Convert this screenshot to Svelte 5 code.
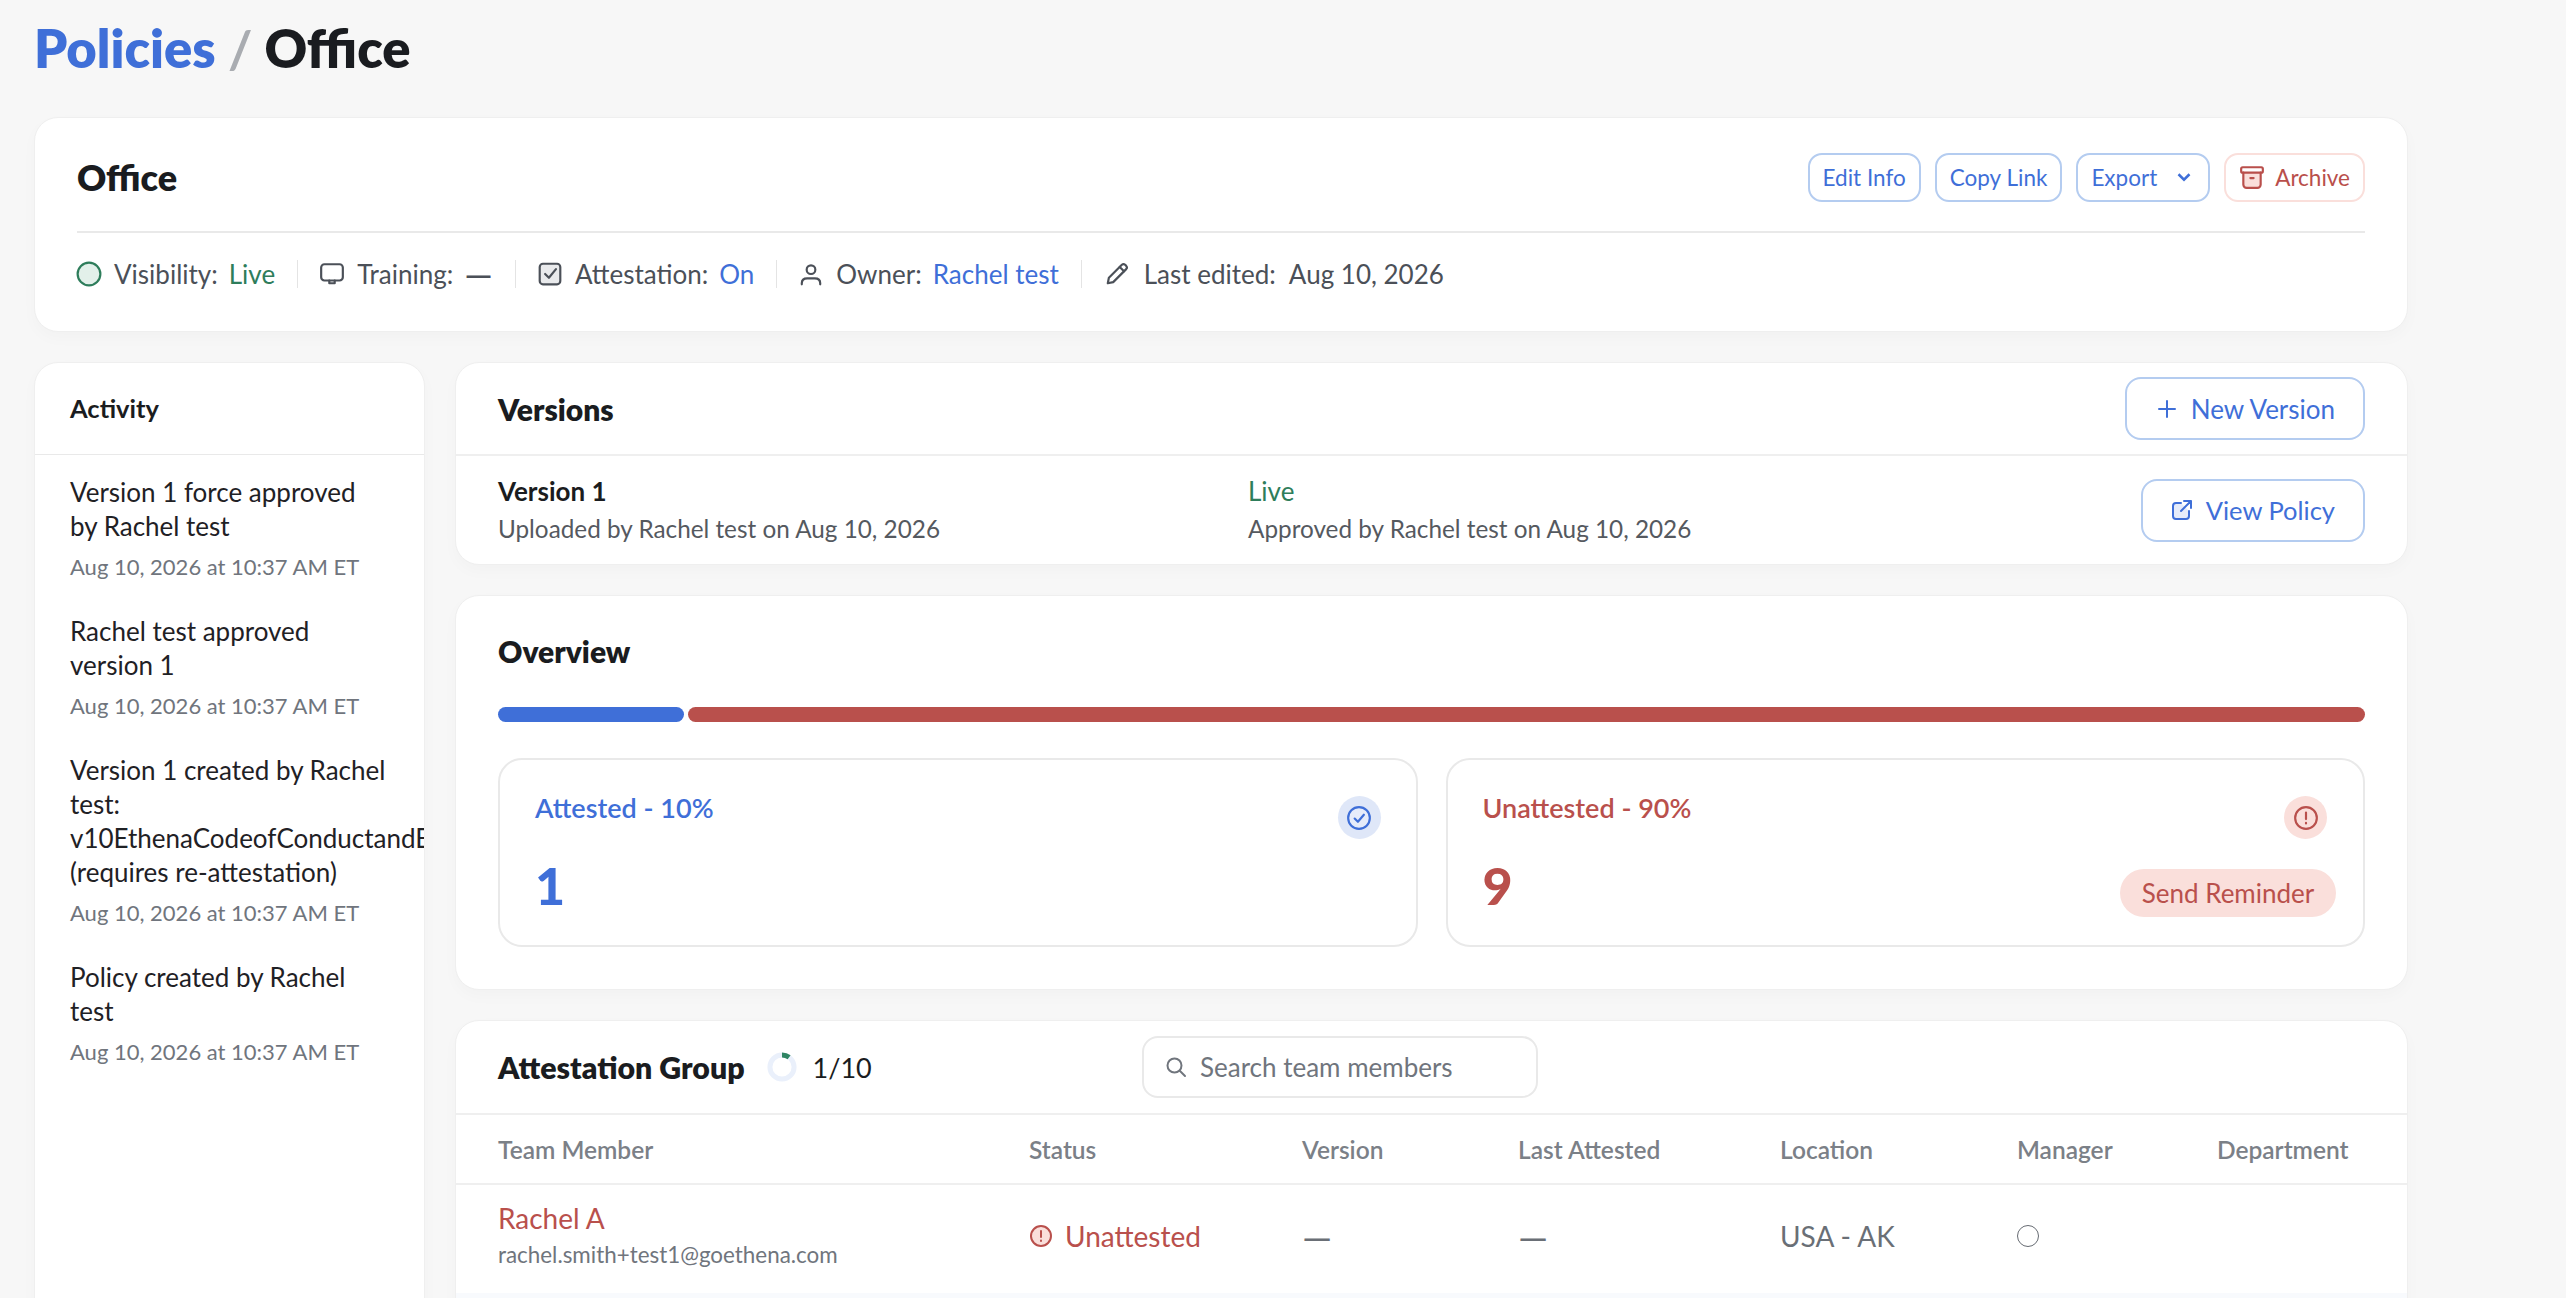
<script lang="ts">
  const activity = [
    { text: "Version 1 force approved by Rachel test", at: "Aug 10, 2026 at 10:37 AM ET" },
    { text: "Rachel test approved version 1", at: "Aug 10, 2026 at 10:37 AM ET" },
    {
      text: "Version 1 created by Rachel test: v10EthenaCodeofConductandEthicsPolicy.pdf (requires re-attestation)",
      at: "Aug 10, 2026 at 10:37 AM ET",
    },
    { text: "Policy created by Rachel test", at: "Aug 10, 2026 at 10:37 AM ET" },
  ];
  const columns = ["Team Member", "Status", "Version", "Last Attested", "Location", "Manager", "Department"];
</script>

<div class="page">
  <h1><span class="crumb">Policies</span> <span class="slash">/</span> Office</h1>

  <section class="card summary">
    <div class="summary-top">
      <h2>Office</h2>
      <div class="actions">
        <button class="small">Edit Info</button>
        <button class="small">Copy Link</button>
        <button class="small">
          Export
          <svg class="chev" viewBox="0 0 16 16"><path d="M4 6l4 4 4-4" /></svg>
        </button>
        <button class="small danger">
          <svg viewBox="0 0 24 24" class="ic">
            <path class="tint" d="M4 8h16v11a3 3 0 0 1-3 3H7a3 3 0 0 1-3-3z" />
            <rect x="2" y="3" width="20" height="5" rx="1.4" />
            <path d="M4 8v11a3 3 0 0 0 3 3h10a3 3 0 0 0 3-3V8M10.5 13h3" />
          </svg>
          Archive
        </button>
      </div>
    </div>
    <div class="meta">
      <div class="meta-item">
        <svg viewBox="0 0 24 24" class="ic green"><circle class="tint" cx="12" cy="12" r="10.5" /></svg>
        Visibility: <span class="live">Live</span>
      </div>
      <div class="meta-item">
        <svg viewBox="0 0 24 24" class="ic">
          <rect x="2" y="3" width="20" height="15" rx="3" />
          <path d="M9.5 18v2.5h5V18" />
        </svg>
        Training: <span class="dash">—</span>
      </div>
      <div class="meta-item">
        <svg viewBox="0 0 24 24" class="ic">
          <rect class="soft" x="2.500" y="2.500" width="19" height="19" rx="3" />
          <path d="M7.500 12l3.500 3.500 6.500-8" />
        </svg>
        Attestation: <span class="link">On</span>
      </div>
      <div class="meta-item">
        <svg viewBox="0 0 24 24" class="ic">
          <circle cx="12" cy="8" r="4" />
          <path d="M3.5 21.5v-1c0-2.800 2-4.500 5-4.500h7c3 0 5 1.700 5 4.500v1" />
        </svg>
        Owner: <span class="link">Rachel test</span>
      </div>
      <div class="meta-item">
        <svg viewBox="0 0 24 24" class="ic">
          <path d="M3.500 20.500l1-5L16.500 3.500a2.200 2.200 0 0 1 3 0l1 1a2.200 2.200 0 0 1 0 3L8.500 19.500z" />
          <path d="M14.500 5.500l4 4" />
        </svg>
        Last edited: <span>Aug 10, 2026</span>
      </div>
    </div>
  </section>

  <div class="columns">
    <aside class="card activity">
      <h3>Activity</h3>
      <ul>
        {#each activity as item}
          <li>
            <p>{item.text}</p>
            <time>{item.at}</time>
          </li>
        {/each}
      </ul>
    </aside>

    <div class="main">
      <section class="card versions">
        <div class="versions-head">
          <h2>Versions</h2>
          <button class="big">
            <svg viewBox="0 0 24 24" class="ic"><path d="M12 4v16M4 12h16" /></svg>
            New Version
          </button>
        </div>
        <div class="version-row">
          <div class="version-col first">
            <strong>Version 1</strong>
            <span class="sub">Uploaded by Rachel test on Aug 10, 2026</span>
          </div>
          <div class="version-col">
            <span class="live">Live</span>
            <span class="sub">Approved by Rachel test on Aug 10, 2026</span>
          </div>
          <button class="big view">
            <svg viewBox="0 0 24 24" class="ic">
              <path class="tint" d="M11 5H6a3 3 0 0 0-3 3v10a3 3 0 0 0 3 3h10a3 3 0 0 0 3-3v-5" />
              <path d="M14 3h7v7M21 3L11 13" />
            </svg>
            View Policy
          </button>
        </div>
      </section>

      <section class="card overview">
        <h2>Overview</h2>
        <div class="bar">
          <div class="seg blue" style="flex: 10"></div>
          <div class="seg red" style="flex: 90"></div>
        </div>
        <div class="stats">
          <div class="stat attested">
            <div class="stat-left">
              <div class="stat-label">Attested - 10%</div>
              <div class="stat-num">1</div>
            </div>
            <div class="stat-right">
              <div class="stat-icon">
                <svg viewBox="0 0 24 24" class="ic">
                  <circle class="tint" cx="12" cy="12" r="10" />
                  <path d="M8 12.500l3 3 5.500-6.500" />
                </svg>
              </div>
            </div>
          </div>
          <div class="stat unattested">
            <div class="stat-left">
              <div class="stat-label">Unattested - 90%</div>
              <div class="stat-num">9</div>
            </div>
            <div class="stat-right">
              <div class="stat-icon">
                <svg viewBox="0 0 24 24" class="ic">
                  <circle class="tint" cx="12" cy="12" r="10" />
                  <path d="M12 7v6M12 16.500v.5" />
                </svg>
              </div>
              <button class="remind">Send Reminder</button>
            </div>
          </div>
        </div>
      </section>

      <section class="card group">
        <div class="group-head">
          <h2>Attestation Group</h2>
          <svg class="ring" viewBox="0 0 36 36">
            <circle cx="18" cy="18" r="14.500" fill="none" stroke="#eaf0fb" stroke-width="6" />
            <circle cx="18" cy="18" r="14.500" fill="none" stroke="#2e8563" stroke-width="6" stroke-dasharray="9.100 100" transform="rotate(-90 18 18)" />
          </svg>
          <span class="count">1/10</span>
          <div class="search">
            <svg viewBox="0 0 24 24" class="ic"><circle cx="10.500" cy="10.500" r="7" /><path d="M16 16l5 5" /></svg>
            <span>Search team members</span>
          </div>
        </div>
        <div class="grid head">
          {#each columns as col}
            <div>{col}</div>
          {/each}
        </div>
        <div class="grid row">
          <div class="member">
            <span class="name">Rachel A</span>
            <span class="email">rachel.smith+test1@goethena.com</span>
          </div>
          <div class="status">
            <svg viewBox="0 0 24 24" class="ic">
              <circle class="tint" cx="12" cy="12" r="10" />
              <path d="M12 7v6M12 16.500v.5" />
            </svg>
            Unattested
          </div>
          <div class="cell dash">—</div>
          <div class="cell dash">—</div>
          <div class="cell">USA - AK</div>
          <div><span class="radio"></span></div>
          <div></div>
        </div>
        <div class="next-row"></div>
      </section>
    </div>
  </div>
</div>

<style>
  :global(body) {
    margin: 0;
    height: 100vh;
    overflow: hidden;
    background: #f7f7f7;
  }

  .page {
    width: 2374px;
    padding: 19px 0 0 34px;
    font-family: Lato, "Noto Sans", sans-serif;
    font-size: 26px;
    color: #1a1c20;
  }

  h1 {
    margin: 0 0 40px;
    font-size: 52.500px;
    line-height: 58px;
    font-weight: 800;
  }

  .crumb {
    color: #3f6fd8;
  }

  .slash {
    color: #a9acb1;
    font-weight: 700;
  }

  h2,
  h3 {
    margin: 0;
    font-weight: 800;
  }

  .card {
    background: #fff;
    border: 1px solid #efefef;
    border-radius: 24px;
    box-sizing: border-box;
    box-shadow: 0 6px 16px rgba(0, 0, 0, 0.025);
  }

  .ic {
    width: 24px;
    height: 24px;
    flex: none;
    fill: none;
    stroke: currentColor;
    stroke-width: 2;
    stroke-linecap: round;
    stroke-linejoin: round;
  }

  .summary {
    height: 215px;
    padding: 0 42px;
  }

  .summary-top {
    display: flex;
    align-items: center;
    justify-content: space-between;
    box-sizing: border-box;
    height: 115px;
    padding-top: 5px;
    border-bottom: 2px solid #e9e9e9;
  }

  .summary-top h2 {
    font-size: 36px;
  }

  .actions {
    display: flex;
    gap: 14px;
  }

  button {
    display: inline-flex;
    align-items: center;
    justify-content: center;
    box-sizing: border-box;
    background: #fff;
    color: #3f6fd8;
    border: 2px solid #b4ccf0;
    font-family: inherit;
    padding: 0;
  }

  .small {
    height: 49px;
    padding: 0 13px;
    gap: 10px;
    border-radius: 14px;
    font-size: 22.500px;
  }

  .small .ic {
    width: 26px;
    height: 26px;
  }

  .chev {
    width: 22px;
    height: 22px;
    margin-left: 6px;
    fill: none;
    stroke: currentColor;
    stroke-width: 1.800;
  }

  .danger {
    color: #b94f4b;
    border-color: #fadfdb;
  }

  .danger .tint {
    fill: #fadfdb;
    stroke: none;
  }

  .meta {
    display: flex;
    align-items: center;
    height: 82px;
    color: #4b5058;
  }

  .meta-item {
    display: flex;
    align-items: center;
    height: 28px;
    gap: 11px;
    padding: 0 22px;
    border-right: 1px solid #e4e4e4;
  }

  .meta-item:first-child {
    padding-left: 0;
  }

  .meta-item:last-child {
    gap: 13px;
    padding-left: 23px;
    border-right: 0;
  }

  .meta-item .ic {
    width: 26px;
    height: 26px;
    margin: 0 1px 0 -1px;
  }

  .dash {
    font-size: 36px;
    line-height: 28px;
  }

  .green {
    color: #2e7d5b;
  }

  .green .tint {
    fill: #e3f0ea;
  }

  .soft {
    fill: #e9eaec;
  }

  .live {
    color: #2e7d5b;
  }

  .link {
    color: #3f6fd8;
  }

  .columns {
    display: grid;
    grid-template-columns: 391px 1fr;
    gap: 30px;
    margin-top: 30px;
  }

  .activity {
    height: 1100px;
    overflow: hidden;
  }

  .activity h3 {
    height: 91px;
    line-height: 90px;
    padding-left: 35px;
    font-size: 25.500px;
    font-weight: 700;
    border-bottom: 1px solid #e9e9e9;
  }

  ul {
    list-style: none;
    margin: 0;
    padding: 20px 0 0 35px;
  }

  li {
    margin-bottom: 30px;
  }

  li p {
    margin: 0 0 6px;
    width: 317px;
    line-height: 34px;
    font-size: 26px;
    color: #1f2125;
  }

  time {
    font-size: 22px;
    line-height: 34px;
    color: #70757d;
  }

  .main {
    display: flex;
    flex-direction: column;
    gap: 30px;
  }

  .versions {
    height: 203px;
  }

  .versions-head {
    display: flex;
    align-items: center;
    justify-content: space-between;
    height: 91px;
    padding: 0 42px;
    border-bottom: 2px solid #efefef;
  }

  .versions h2,
  .overview h2,
  .group h2 {
    font-size: 30px;
  }

  .big {
    height: 63px;
    gap: 12px;
    padding: 0 28px;
    border-radius: 16px;
    font-size: 26px;
  }

  .big.view {
    font-size: 25.500px;
    padding: 0 28px 0 27px;
  }

  .big .tint {
    fill: #e6ecfa;
    stroke: currentColor;
  }

  .version-row {
    display: flex;
    align-items: center;
    height: 108px;
    padding: 0 42px;
  }

  .version-col {
    display: flex;
    flex-direction: column;
    gap: 4px;
    line-height: 33px;
    color: #55595f;
    flex: 0 0 auto;
  }

  .version-col.first {
    width: 750px;
  }

  .version-col strong {
    color: #1a1c20;
    font-weight: 700;
  }

  .sub {
    font-size: 24.300px;
  }

  .version-row .big {
    margin-left: auto;
  }

  .overview {
    height: 395px;
    padding: 32px 42px 0;
  }

  .overview h2 {
    line-height: 46px;
  }

  .bar {
    display: flex;
    gap: 4px;
    height: 15px;
    margin-top: 33px;
  }

  .seg {
    border-radius: 8px;
  }

  .blue {
    background: #3f6fd8;
  }

  .red {
    background: #b9504c;
  }

  .stats {
    display: grid;
    grid-template-columns: 1fr 1fr;
    gap: 28px;
    margin-top: 36px;
  }

  .stat {
    display: flex;
    justify-content: space-between;
    height: 189px;
    padding: 0 35px;
    box-sizing: border-box;
    border: 2px solid #e9e9e9;
    border-radius: 24px;
  }

  .stat-label {
    margin-top: 31px;
    line-height: 34px;
    font-weight: 600;
    font-size: 27px;
  }

  .stat-num {
    margin-top: 25px;
    font-size: 52px;
    line-height: 70px;
    font-weight: 900;
  }

  .stat-right {
    display: flex;
    flex-direction: column;
    align-items: flex-end;
    gap: 30px;
    padding-top: 36px;
  }

  .stat-icon {
    display: flex;
    align-items: center;
    justify-content: center;
    width: 43px;
    height: 43px;
    border-radius: 50%;
  }

  .stat-icon .ic {
    width: 26px;
    height: 26px;
  }

  .attested {
    color: #3f6fd8;
  }

  .attested .stat-icon {
    background: #dfe7f8;
  }

  .attested .tint {
    fill: #e6ecfa;
  }

  .unattested {
    color: #b9504c;
  }

  .unattested .stat-icon {
    background: #fadfdb;
    margin-right: 9px;
  }

  .unattested .stat-right {
    margin-right: -8px;
  }

  .remind {
    height: 48px;
    width: 216px;
    border: 0;
    border-radius: 24px;
    background: #fadfdb;
    color: #b9504c;
    font-size: 26px;
  }

  .group {
    height: 400px;
    overflow: hidden;
  }

  .group-head {
    display: flex;
    align-items: center;
    height: 92px;
    padding-left: 42px;
    border-bottom: 2px solid #efefef;
  }

  .group h2 {
    font-size: 30.300px;
  }

  .ring {
    width: 30px;
    height: 30px;
    margin-left: 22px;
  }

  .count {
    margin-left: 16px;
    font-size: 27px;
  }

  .search {
    display: flex;
    align-items: center;
    gap: 12px;
    box-sizing: border-box;
    width: 396px;
    height: 62px;
    margin-left: auto;
    margin-right: 869px;
    padding: 0 20px;
    border: 2px solid #e9e9e9;
    border-radius: 16px;
    color: #70757d;
  }

  .grid {
    display: grid;
    grid-template-columns: 531px 273px 216px 262px 237px 200px 1fr;
    padding-left: 42px;
  }

  .head {
    align-items: center;
    height: 68px;
    border-bottom: 2px solid #efefef;
    font-size: 24.500px;
    font-weight: 600;
    color: #7b8087;
  }

  .row {
    align-items: center;
    box-sizing: border-box;
    height: 108px;
    padding-bottom: 7px;
  }

  .member {
    display: flex;
    flex-direction: column;
    gap: 6px;
    margin-top: -3px;
  }

  .name {
    color: #b9504c;
    font-size: 28px;
  }

  .email {
    color: #70757d;
    font-size: 22.400px;
  }

  .status {
    display: flex;
    align-items: center;
    gap: 12px;
    color: #b9504c;
    font-size: 28px;
  }

  .status .tint {
    fill: #fadfdb;
  }

  .cell {
    color: #6a6f76;
    font-size: 28px;
  }

  .cell.dash {
    font-size: 38px;
  }

  .radio {
    display: block;
    width: 22px;
    height: 22px;
    box-sizing: border-box;
    border: 1px solid #666b72;
    border-radius: 50%;
  }

  .next-row {
    height: 40px;
    background: #f8fafd;
  }
</style>
